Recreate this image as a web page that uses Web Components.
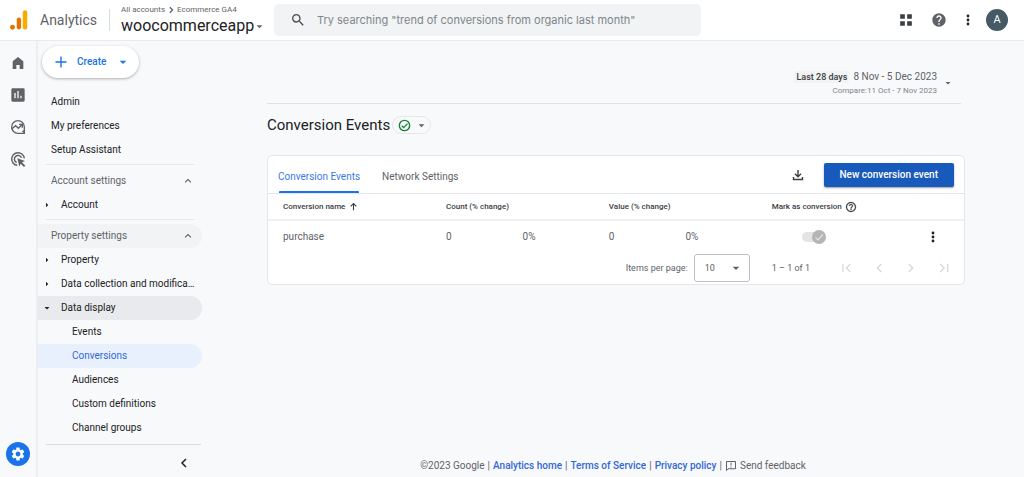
<!DOCTYPE html>
<html lang="en">
<head>
<meta charset="utf-8">
<meta name="viewport" content="width=device-width, initial-scale=1">
<title>Analytics | Conversion Events</title>
<style>
  html { height: 100%; }
  body {
    margin: 0; min-height: 100%; display: flex; flex-direction: column;
    background: #f8f9fb; color: #202124;
    font: 400 10px/16px Roboto, "Liberation Sans", sans-serif;
    --blue: #1a73e8; --grey: #5f6368; --line: #e4e6e9;
  }
</style>
</head>
<body>
<ga-header></ga-header>
<ga-shell>
  <ga-rail slot="rail"></ga-rail>
  <ga-sidebar slot="sidebar">
    <ga-nav-item>Admin</ga-nav-item>
    <ga-nav-item>My preferences</ga-nav-item>
    <ga-nav-item>Setup Assistant</ga-nav-item>
    <ga-nav-section label="Account settings">
      <ga-nav-item level="1" arrow="right">Account</ga-nav-item>
    </ga-nav-section>
    <ga-nav-section label="Property settings" shaded>
      <ga-nav-item level="1" arrow="right">Property</ga-nav-item>
      <ga-nav-item level="1" arrow="right">Data collection and modification</ga-nav-item>
      <ga-nav-item level="1" arrow="down" open>Data display</ga-nav-item>
      <ga-nav-item level="2">Events</ga-nav-item>
      <ga-nav-item level="2" current>Conversions</ga-nav-item>
      <ga-nav-item level="2">Audiences</ga-nav-item>
      <ga-nav-item level="2">Custom definitions</ga-nav-item>
      <ga-nav-item level="2">Channel groups</ga-nav-item>
    </ga-nav-section>
  </ga-sidebar>
  <ga-date-range></ga-date-range>
  <ga-page-title>Conversion Events</ga-page-title>
  <ga-card>
    <ga-tabs></ga-tabs>
    <ga-events-table></ga-events-table>
    <ga-paginator></ga-paginator>
  </ga-card>
  <ga-footer slot="footer"></ga-footer>
</ga-shell>

<script>
const BASE = `
  *, *::before, *::after { box-sizing: border-box; }
  button, input, select { font: inherit; color: inherit; margin: 0; padding: 0; border: 0; background: none; }
  button { display: inline-flex; align-items: center; justify-content: center; cursor: pointer; }
  a { color: inherit; text-decoration: none; }
`;

function define(name, css, html, setup) {
  const template = document.createElement('template');
  template.innerHTML = `<style>${BASE}${css}</style>${html}`;
  customElements.define(name, class extends HTMLElement {
    constructor() {
      super();
      this.attachShadow({ mode: 'open' }).append(template.content.cloneNode(true));
    }
    connectedCallback() { if (setup) setup(this, this.shadowRoot); }
  });
}

const ICONS = {
  logo: '<circle cx="3" cy="20.700" r="2.900" fill="#e37400"/><path d="M10.700 11.500v9.200" stroke="#e37400" stroke-width="5.200" stroke-linecap="round"/><path d="M18 3v17.700" stroke="#f9ab00" stroke-width="5.400" stroke-linecap="round"/>',
  chevron: '<path d="M8.500 4l8 8-8 8" fill="none" stroke="currentColor" stroke-width="4"/>',
  left: '<path d="M16 5l-7 7 7 7" fill="none" stroke="currentColor" stroke-width="2"/>',
  right: '<path d="M8 5l7 7-7 7" fill="none" stroke="currentColor" stroke-width="2"/>',
  collapse: '<path d="M16 4l-8 8 8 8" fill="none" stroke="currentColor" stroke-width="3"/>',
  first: '<path d="M5 5v14M18 5l-7 7 7 7" fill="none" stroke="currentColor" stroke-width="2"/>',
  last: '<path d="M20 5v14M7 5l7 7-7 7" fill="none" stroke="currentColor" stroke-width="2"/>',
  up: '<path d="M5 15.500l7-7 7 7" fill="none" stroke="currentColor" stroke-width="2.500"/>',
  caret: '<path d="M2 8h20L12 18z"/>',
  arrowRight: '<path d="M8 3v18l9-9z"/>',
  search: '<path d="M15.500 14h-.79l-.28-.27A6.471 6.471 0 0 0 16 9.500 6.500 6.500 0 1 0 9.500 16c1.610 0 3.090-.59 4.230-1.570l.27.28v.79l5 4.990L20.490 19l-4.990-5zm-6 0C7.010 14 5 11.990 5 9.500S7.010 5 9.500 5 14 7.010 14 9.500 11.990 14 9.500 14z"/>',
  grid: '<path d="M2 2h8v8H2zM14 2h8v8h-8zM2 14h8v8H2zM14 14h8v8h-8z"/>',
  help: '<path d="M12 2C6.480 2 2 6.480 2 12s4.480 10 10 10 10-4.480 10-10S17.520 2 12 2zm1 17h-2v-2h2v2zm2.070-7.750l-.9.920C13.450 12.900 13 13.500 13 15h-2v-.5c0-1.100.45-2.100 1.170-2.830l1.240-1.260c.37-.36.59-.86.59-1.410 0-1.100-.9-2-2-2s-2 .9-2 2H8c0-2.210 1.790-4 4-4s4 1.790 4 4c0 .88-.36 1.680-.93 2.250z"/>',
  helpOutline: '<path d="M11 18h2v-2h-2v2zm1-16C6.480 2 2 6.480 2 12s4.480 10 10 10 10-4.480 10-10S17.520 2 12 2zm0 18c-4.410 0-8-3.590-8-8s3.590-8 8-8 8 3.590 8 8-3.590 8-8 8zm0-14c-2.210 0-4 1.790-4 4h2c0-1.100.9-2 2-2s2 .9 2 2c0 2-3 1.750-3 5h2c0-2.250 3-2.500 3-5 0-2.210-1.790-4-4-4z" stroke="currentColor" stroke-width=".4"/>',
  more: '<circle cx="12" cy="4" r="2.800"/><circle cx="12" cy="12" r="2.800"/><circle cx="12" cy="20" r="2.800"/>',
  home: '<path d="M4 21V9.500L12 3l8 6.500V21h-5.500v-6h-5v6z"/>',
  reports: '<path fill-rule="evenodd" d="M4 2h16a2 2 0 0 1 2 2v16a2 2 0 0 1-2 2H4a2 2 0 0 1-2-2V4c0-1.100.9-2 2-2zm2.500 7v8h2V9zm4.500-3v11h2V6zm4.500 7v4h2v-4z"/>',
  explore: '<path d="M21.500 12v9.500H12a9.500 9.500 0 1 1 9.500-9.500z" fill="none" stroke="currentColor" stroke-width="2"/><path d="M17.500 18.500l4 3v-5z"/><path d="M2.500 15l6-5 4 4 5.500-5.500M13.500 8h5v5" fill="none" stroke="currentColor" stroke-width="2"/>',
  ads: '<path d="M11 21.500A9.500 9.500 0 1 1 21.500 11M10 17.200A5.500 5.500 0 1 1 17.200 10" fill="none" stroke="currentColor" stroke-width="2.200"/><path d="M11 11l11.500 4-4.500 2 5 5-2 2-5-5-2 4.500z"/>',
  gear: '<path d="M19.140 12.940c.04-.3.06-.61.06-.94s-.02-.64-.07-.94l2.030-1.580a.49.49 0 0 0 .12-.61l-1.920-3.320a.488.488 0 0 0-.59-.22l-2.390.96c-.5-.38-1.030-.7-1.620-.94l-.36-2.540a.484.484 0 0 0-.48-.41h-3.840c-.24 0-.43.17-.47.41l-.36 2.540c-.59.24-1.130.57-1.620.94l-2.390-.96c-.22-.08-.47 0-.59.22L2.740 8.870c-.12.21-.08.47.12.61l2.030 1.580c-.05.3-.09.63-.09.94s.02.64.07.94l-2.030 1.580a.49.49 0 0 0-.12.61l1.920 3.320c.12.22.37.29.59.22l2.390-.96c.5.38 1.030.7 1.620.94l.36 2.540c.05.24.24.41.48.41h3.840c.24 0 .44-.17.47-.41l.36-2.540c.59-.24 1.130-.56 1.620-.94l2.390.96c.22.08.47 0 .59-.22l1.920-3.320c.12-.22.07-.47-.12-.61l-2.010-1.580zM12 15.600A3.610 3.610 0 0 1 8.400 12c0-1.980 1.620-3.600 3.600-3.600s3.600 1.620 3.600 3.600-1.620 3.600-3.600 3.600z"/>',
  plus: '<path d="M12 1v22M1 12h22" stroke="currentColor" stroke-width="2.800"/>',
  check: '<circle cx="12" cy="12" r="9.500" fill="none" stroke="currentColor" stroke-width="2.600"/><path d="M7 12.500l3.500 3.500L17.500 8.500" fill="none" stroke="currentColor" stroke-width="2.400"/>',
  sort: '<path d="M12 22V4M4.500 11.500L12 4l7.500 7.500" fill="none" stroke="currentColor" stroke-width="3"/>',
  download: '<path d="M12 2v13M6 9.500l6 6 6-6M3 16v5h18v-5" fill="none" stroke="currentColor" stroke-width="2.800"/>',
  feedback: '<path d="M3 3h18v14.500H6L3 21z" fill="none" stroke="currentColor" stroke-width="2"/><path d="M12 5.500v5.500M12 13v2.200" stroke="currentColor" stroke-width="2"/>',
};

/* Square glyph drawn from the table above; --size sets its edge. */
define('ga-icon', `
  :host { display: inline-flex; flex: none; width: var(--size, 16px); height: var(--size, 16px); }
  svg { width: 100%; height: 100%; fill: currentColor; overflow: visible; }
`, '<svg viewBox="0 0 24 24" aria-hidden="true"></svg>', (host, root) => {
  root.querySelector('svg').innerHTML = ICONS[host.getAttribute('name')] || '';
});

define('ga-header', `
  :host { display: block; background: #fff; border-bottom: 1px solid #e8eaed; }
  header { display: grid; grid-template-columns: 264px minmax(0, 427px) 1fr; align-items: center; height: 40px; padding: 0 16px 0 10px; }
  .brand { display: flex; align-items: center; }
  .brand ga-icon { --size: 20px; }
  .name { margin-left: 10px; font-size: 14px; color: var(--grey); }
  .account { margin-left: 12px; padding-left: 12px; position: relative; }
  .account::before { content: ""; position: absolute; left: 0; top: 5px; height: 22px; width: 1px; background: #dadce0; }
  .path { display: flex; align-items: center; gap: 2px; font-size: 8px; line-height: 12px; color: var(--grey); }
  .path ga-icon { --size: 8px; }
  .prop { font-size: 16px; line-height: 20px; gap: 2px; }
  .prop ga-icon { --size: 7px; color: var(--grey); }
  .search { display: flex; align-items: center; height: 32px; padding: 0 16px; gap: 11px; background: #f1f3f4; border-radius: 5px; color: #4a4d51; }
  .search input { flex: 1; min-width: 0; outline: 0; font-family: Inter, "Liberation Sans", sans-serif; font-size: 11px; }
  .search input::placeholder { color: #80868b; opacity: 1; }
  .actions { display: flex; align-items: center; justify-content: flex-end; color: #3c4043; }
  .actions button:nth-child(1) { --size: 14px; }
  .actions button:nth-child(2) { margin-left: 18px; color: var(--grey); }
  .actions button:nth-child(3) { margin-left: 15px; color: #202124; --size: 12px; }
  .actions .avatar { margin-left: 12px; width: 22px; height: 22px; border-radius: 50%; background: #455a64; color: #fff; font-size: 11px; }
`, `
  <header>
    <div class="brand">
      <ga-icon name="logo"></ga-icon><span class="name">Analytics</span>
      <div class="account">
        <div class="path"><span>All accounts</span><ga-icon name="chevron"></ga-icon><span>Ecommerce GA4</span></div>
        <button class="prop">woocommerceapp<ga-icon name="caret"></ga-icon></button>
      </div>
    </div>
    <label class="search"><ga-icon name="search"></ga-icon>
      <input type="search" aria-label="Search" placeholder='Try searching "trend of conversions from organic last month"'></label>
    <div class="actions">
      <button aria-label="Apps"><ga-icon name="grid"></ga-icon></button>
      <button aria-label="Help"><ga-icon name="help"></ga-icon></button>
      <button aria-label="More"><ga-icon name="more"></ga-icon></button>
      <button class="avatar" aria-label="Account: A">A</button>
    </div>
  </header>`);

define('ga-shell', `
  :host { flex: 1; display: grid; grid-template-columns: 38px 164px minmax(0, 1fr); }
  main { display: flex; flex-direction: column; padding: 0 59px 0 65px; }
  .content { display: flex; flex-direction: column; }
  footer { margin-top: auto; }
`, `
  <slot name="rail"></slot>
  <slot name="sidebar"></slot>
  <div class="content"><main><slot></slot></main><footer><slot name="footer"></slot></footer></div>`);

define('ga-rail', `
  :host { display: block; border-right: 2px solid #eceef0; }
  nav { display: flex; flex-direction: column; align-items: center; height: 100%; padding: 14px 0 11px; gap: 16px; color: var(--grey); }
  .admin { margin-top: auto; width: 24px; height: 24px; border-radius: 50%; background: var(--blue); color: #fff; align-items: center; justify-content: center; }
  a { display: flex; }
`, `
  <nav aria-label="Primary">
    <a href="#home" aria-label="Home"><ga-icon name="home"></ga-icon></a>
    <a href="#reports" aria-label="Reports"><ga-icon name="reports"></ga-icon></a>
    <a href="#explore" aria-label="Explore"><ga-icon name="explore"></ga-icon></a>
    <a href="#advertising" aria-label="Advertising"><ga-icon name="ads"></ga-icon></a>
    <a class="admin" href="#admin" aria-label="Admin"><ga-icon name="gear"></ga-icon></a>
  </nav>`);

define('ga-sidebar', `
  :host { display: flex; flex-direction: column; }
  .create { align-self: flex-start; height: 32px; margin: 5px 0 12px 4px; padding: 0 12px 0 13px; border-radius: 16px; background: #fff; color: var(--blue); font-weight: 500; box-shadow: 0 1px 3px rgba(60,64,67,.4); }
  .create ga-icon { --size: 12px; }
  .create span { margin: 0 13px 0 10px; }
  .create ga-icon:last-child { --size: 8px; }
  .foot { display: flex; justify-content: flex-end; margin: 4px 1px 0 8px; padding: 12px 11px 0 0; border-top: 1px solid #dadce0; }
  .foot ga-icon { --size: 12px; }
`, `
  <button class="create"><ga-icon name="plus"></ga-icon><span>Create</span><ga-icon name="caret"></ga-icon></button>
  <nav aria-label="Admin"><slot></slot></nav>
  <div class="foot"><button aria-label="Collapse navigation"><ga-icon name="collapse"></ga-icon></button></div>`);

define('ga-nav-item', `
  :host { display: block; }
  a { display: flex; align-items: center; height: 24px; padding: 0 5px 0 13px; border-radius: 0 12px 12px 0; }
  .text { flex: 1; min-width: 0; overflow: hidden; white-space: nowrap; text-overflow: ellipsis; }
  ga-icon { --size: 6px; margin-right: 11px; }
  :host([level="1"]) a { padding-left: 6px; }
  :host([level="2"]) a { padding-left: 34px; }
  :host([open]) a { background: #e8eaed; }
  :host([current]) a { background: #e8f0fe; color: #3367d6; }
`, '<a href="#"><span class="text"><slot></slot></span></a>', (host, root) => {
  const link = root.querySelector('a');
  const arrow = host.getAttribute('arrow');
  link.href = '#' + host.textContent.trim().toLowerCase().replace(/ /g, '-');
  if (host.hasAttribute('current')) link.setAttribute('aria-current', 'page');
  if (arrow) {
    const icon = document.createElement('ga-icon');
    icon.setAttribute('name', arrow === 'down' ? 'caret' : 'arrowRight');
    link.prepend(icon);
  }
});

define('ga-nav-section', `
  :host { display: block; }
  :host::before { content: ""; display: block; height: 1px; margin: 2px 8px 4px; background: var(--line); }
  button { display: flex; width: 100%; height: 24px; justify-content: space-between; padding: 0 9px 0 13px; border-radius: 0 12px 12px 0; color: var(--grey); }
  :host([shaded]) button { background: #f1f3f4; }
  ga-icon { --size: 10px; }
`, '<button aria-expanded="true"><span></span><ga-icon name="up"></ga-icon></button><slot></slot>', (host, root) => {
  root.querySelector('span').textContent = host.getAttribute('label');
});

define('ga-date-range', `
  :host { display: flex; justify-content: flex-end; margin: 28px 4px 0 0; padding: 0 10px 6px 0; border-bottom: 1px solid #e0e2e5; }
  button { gap: 8px; text-align: right; color: var(--grey); }
  .current { display: flex; align-items: center; justify-content: flex-end; gap: 4px; line-height: 16px; }
  .tag { padding: 0 2px; font-size: 9px; line-height: 12px; font-weight: 500; background: #f1f3f4; color: #3c4043; border-radius: 2px; }
  .compare { display: block; font-size: 8px; line-height: 12px; color: #80868b; }
  ga-icon { --size: 6px; }
`, `
  <button aria-label="Date range"><span><span class="current"><span class="tag">Last 28 days</span><span>8 Nov - 5 Dec 2023</span></span>
  <span class="compare">Compare:11 Oct - 7 Nov 2023</span></span><ga-icon name="caret"></ga-icon></button>`);

define('ga-page-title', `
  :host { display: flex; align-items: center; gap: 2px; margin: 11px 0 20px; }
  h1 { margin: 0; font-weight: 400; font-size: 15px; line-height: 20px; }
  button { width: 39px; height: 18px; gap: 7px; border: 1px solid var(--line); border-radius: 9px; color: #188038; --size: 13px; }
  ga-icon:last-child { --size: 7px; color: var(--grey); }
`, '<h1><slot></slot></h1><button aria-label="Data quality"><ga-icon name="check"></ga-icon><ga-icon name="caret"></ga-icon></button>');

define('ga-card', `
  :host { display: block; background: #fff; border: 1px solid var(--line); border-radius: 5px; }
`, '<slot></slot>');

define('ga-tabs', `
  :host { display: flex; align-items: center; height: 37px; padding: 0 10px; border-bottom: 1px solid var(--line); }
  .tabs { display: flex; align-self: stretch; gap: 22px; flex: 1; }
  .tabs button { padding-top: 5px; color: var(--grey); position: relative; }
  .tabs button[aria-selected="true"] { color: #3b78e7; }
  .tabs button[aria-selected="true"]::after { content: ""; position: absolute; left: 1px; right: 1px; bottom: 0; height: 2px; background: var(--blue); border-radius: 1px 1px 0 0; }
  .save { --size: 12px; margin-right: 20px; color: #3c4043; }
  .new { height: 24px; padding: 0 16px; border-radius: 2px; background: #185abc; color: #fff; font-weight: 500; box-shadow: 0 1px 2px rgba(60,64,67,.5); }
`, `
  <div class="tabs" role="tablist">
    <button role="tab" aria-selected="true">Conversion Events</button>
    <button role="tab" aria-selected="false">Network Settings</button>
  </div>
  <button class="save" aria-label="Download"><ga-icon name="download"></ga-icon></button>
  <button class="new">New conversion event</button>`);

define('ga-toggle', `
  :host { display: inline-flex; }
  label { display: flex; position: relative; width: 24px; height: 14px; align-items: center; color: #e4e4e4; }
  input { appearance: none; width: 22px; height: 10px; border-radius: 5px; background: #e4e4e4; }
  .thumb { position: absolute; right: 0; top: 0; width: 14px; height: 14px; border-radius: 50%; background: #b5b5b5; }
  svg { display: block; width: 14px; height: 14px; }
`, '<label><input type="checkbox" checked disabled aria-label="Mark purchase as conversion"><span class="thumb"><svg viewBox="0 0 14 14"><path d="M3.500 7.300L6 9.800l4.800-5.300" fill="none" stroke="currentColor" stroke-width="1.200"/></svg></span></label>');

define('ga-events-table', `
  :host { display: block; color: var(--grey); }
  table { width: 100%; border-collapse: collapse; table-layout: fixed; }
  th, td { padding: 0; text-align: left; font-weight: 400; }
  th { height: 26px; font-size: 8px; font-weight: 500; color: #3c4043; border-bottom: 2px solid #eff0f2; }
  td { height: 32px; font-size: 10px; }
  th:first-child, td:first-child { padding-left: 15px; }
  th button { gap: 4px; font-weight: 500; --size: 9px; }
  th .mark { --size: 12px; gap: 3px; }
  ga-toggle { margin-left: 30px; vertical-align: middle; }
  td:last-child { text-align: right; padding-right: 25px; --size: 12px; }
  td button { vertical-align: middle; color: #202124; }
  .name { width: 178px; } .num { width: 11%; } .pct { width: 12.400%; } .mk { width: 16%; }
`, `
  <table>
    <colgroup><col class="name"><col class="num"><col class="pct"><col class="num"><col class="pct"><col class="mk"><col></colgroup>
    <thead><tr>
      <th scope="col"><button>Conversion name<ga-icon name="sort"></ga-icon></button></th>
      <th scope="col" colspan="2">Count (% change)</th>
      <th scope="col" colspan="2">Value (% change)</th>
      <th scope="col" colspan="2"><button class="mark" aria-label="Mark as conversion help">Mark as conversion<ga-icon name="helpOutline"></ga-icon></button></th>
    </tr></thead>
    <tbody><tr>
      <td>purchase</td><td>0</td><td>0%</td><td>0</td><td>0%</td>
      <td><ga-toggle></ga-toggle></td><td><button aria-label="Row menu"><ga-icon name="more"></ga-icon></button></td>
    </tr></tbody>
  </table>`);

define('ga-paginator', `
  :host { display: flex; align-items: center; justify-content: flex-end; height: 32px; padding-right: 14px; font-size: 9px; color: var(--grey); }
  label { display: flex; align-items: center; gap: 6px; }
  .box { position: relative; display: flex; width: 56px; height: 28px; }
  select { appearance: none; width: 100%; padding: 0 10px; border: 1px solid #bdc1c6; border-radius: 3px; }
  .box ga-icon { position: absolute; right: 10px; top: 10px; --size: 8px; pointer-events: none; }
  .range { margin: 0 30px 0 22px; }
  nav { display: flex; gap: 18px; --size: 14px; color: #d2d4d7; }
`, `
  <label>Items per page: <span class="box"><select><option>10</option><option>25</option><option>50</option></select><ga-icon name="caret"></ga-icon></span></label>
  <span class="range">1 – 1 of 1</span>
  <nav aria-label="Pages">
    <button aria-label="First page" disabled><ga-icon name="first"></ga-icon></button>
    <button aria-label="Previous page" disabled><ga-icon name="left"></ga-icon></button>
    <button aria-label="Next page" disabled><ga-icon name="right"></ga-icon></button>
    <button aria-label="Last page" disabled><ga-icon name="last"></ga-icon></button>
  </nav>`);

define('ga-footer', `
  :host { display: flex; justify-content: center; align-items: center; gap: 3px; padding-bottom: 3px; color: var(--grey); }
  a { color: #3367d6; font-weight: 500; }
  button { gap: 3px; --size: 12px; }
`, `
  <span>©2023 Google</span><span>|</span><a href="#home">Analytics home</a><span>|</span><a href="#terms">Terms of Service</a><span>|</span><a href="#privacy">Privacy policy</a><span>|</span>
  <button><ga-icon name="feedback"></ga-icon>Send feedback</button>`);
</script>
</body>
</html>
